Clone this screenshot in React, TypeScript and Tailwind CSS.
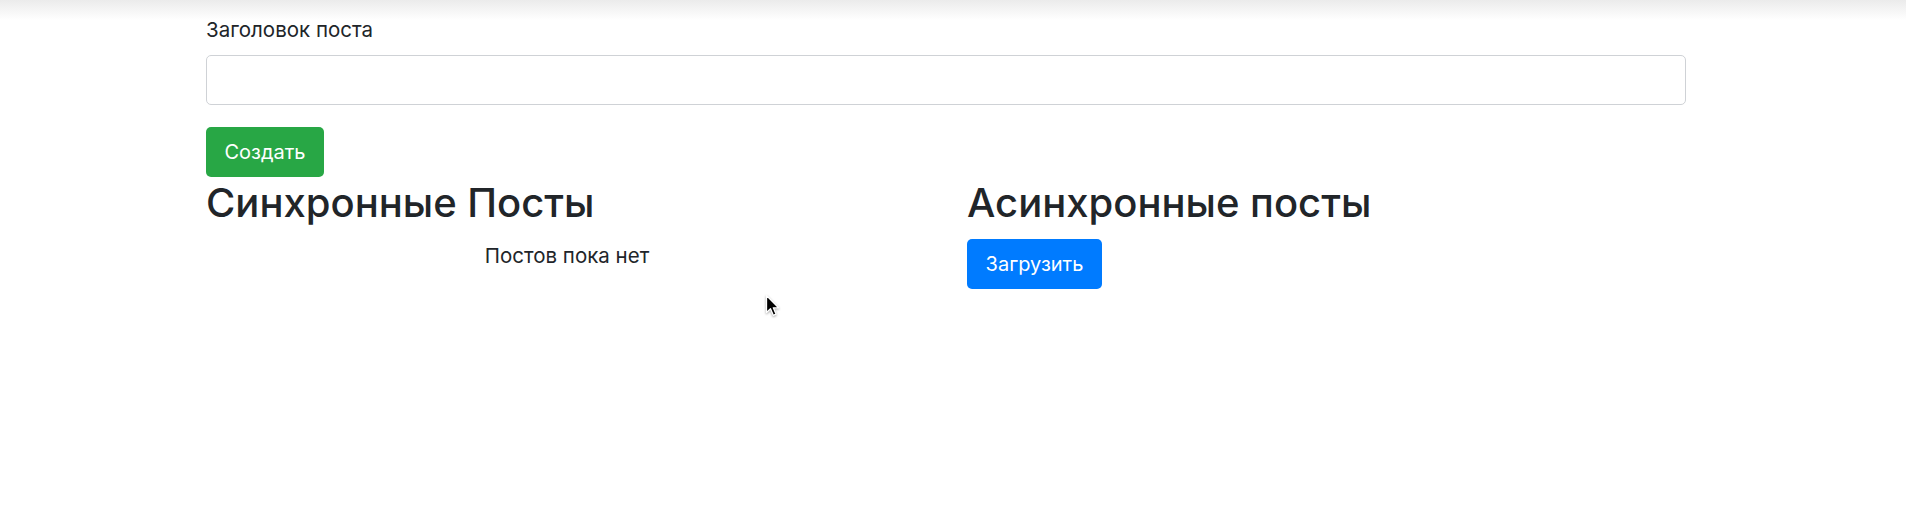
import React from 'react';

const font = { fontFamily: 'Inter, "Liberation Sans", sans-serif' };

const Cursor: React.FC = () => (
  <svg
    className="absolute left-[765px] top-[294px] drop-shadow-[0_1px_1px_rgba(0,0,0,0.35)]"
    width="16"
    height="24"
    viewBox="0 0 16 24"
  >
    <path
      d="M1.5 1.5 L1.5 18.5 L5.5 14.8 L8.3 21.3 L11 20.1 L8.3 13.8 L13.6 13.8 Z"
      fill="#000"
      stroke="#fff"
      strokeWidth="1.3"
      strokeLinejoin="round"
    />
  </svg>
);

export default function App() {
  return (
    <div className="relative h-[512px] w-full overflow-hidden bg-white text-[#212529]" style={font}>
      {/* header shadow */}
      <div className="absolute inset-x-0 top-0 h-[20px] bg-gradient-to-b from-[#ebebeb] to-white" />

      <div className="relative ml-[206px] w-[1480px] pt-[15px]">
        <label className="mb-[10px] block text-[20.5px] leading-[30px]">Заголовок поста</label>
        <input
          type="text"
          className="mb-[22px] block h-[50px] w-full rounded-[5px] border border-[#cfd2d6] bg-white px-[15px] text-[20px] outline-none"
        />
        <button className="h-[50px] w-[118px] rounded-[5px] bg-[#28a745] text-[20px] leading-[30px] text-white">
          Создать
        </button>

        <div className="grid grid-cols-2 gap-[36px]">
          <div>
            <h2 className="mt-[2px] mb-[14px] text-[40px] leading-[48px] font-medium">Синхронные Посты</h2>
            <div className="text-center text-[20.5px] leading-[30px]">Постов пока нет</div>
          </div>
          <div>
            <h2 className="mt-[2px] mb-[12px] pl-[3px] text-[40px] leading-[48px] font-medium">Асинхронные посты</h2>
            <button className="ml-[3px] h-[50px] w-[135px] rounded-[5px] bg-[#007bff] text-[20px] leading-[30px] text-white">
              Загрузить
            </button>
          </div>
        </div>
      </div>

      <Cursor />
    </div>
  );
}
